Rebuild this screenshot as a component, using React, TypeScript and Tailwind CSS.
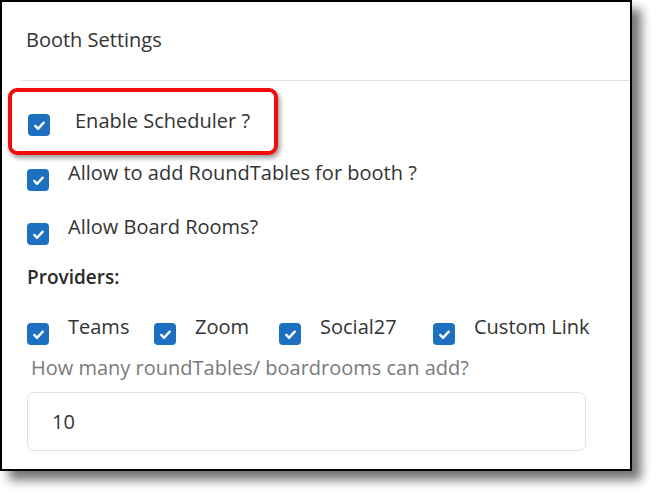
import React from "react";

function Check() {
  return (
    <span className="flex h-[22px] w-[22px] shrink-0 items-center justify-center rounded-[4px] bg-[#1d6fbf]">
      <svg width="15" height="15" viewBox="0 0 16 16" fill="none">
        <path d="M3.5 8.5l3 3 6-6.5" stroke="white" strokeWidth="2.6" strokeLinecap="round" strokeLinejoin="round" />
      </svg>
    </span>
  );
}

function Row({ label, gap, mt }: { label: string; gap: string; mt: string }) {
  return (
    <div className="flex items-start h-[28px]">
      <div className={mt}>
        <Check />
      </div>
      <span className={`${gap} leading-[28px]`}>{label}</span>
    </div>
  );
}

function Provider({ label, width }: { label: string; width: string }) {
  return (
    <div className={`flex items-start ${width}`}>
      <div className="mt-[10px]">
        <Check />
      </div>
      <span className="ml-[19px] leading-[28px]">{label}</span>
    </div>
  );
}

export default function App() {
  return (
    <div className="min-h-[496px] w-[657px] bg-white" style={{ fontFamily: '"Open Sans", "Noto Sans", sans-serif' }}>
      <div className="relative h-[471px] w-[632px] border-2 border-black bg-white text-[20px] text-[#333] shadow-[9px_9px_10px_rgba(0,0,0,0.55)]">
        <div className="pl-[24px] pt-[23px] h-[78px] text-[#333]">
          <span className="leading-[28px]">Booth Settings</span>
        </div>
        <div className="ml-[19px] border-t border-[#e3e3e3]" />
        <div className="flex flex-col pl-[25px] pt-[26px]">
          <div className="pl-[1px]">
            <Row label="Enable Scheduler ?" gap="ml-[25px]" mt="mt-[7px]" />
          </div>
          <div className="mt-[24px]">
            <Row label="Allow to add RoundTables for booth ?" gap="ml-[19px]" mt="mt-[10px]" />
          </div>
          <div className="mt-[26px]">
            <Row label="Allow Board Rooms?" gap="ml-[19px]" mt="mt-[10px]" />
          </div>
          <div className="mt-[22px] text-[19px] font-semibold leading-[28px] text-[#2a2a2a]">Providers:</div>
          <div className="mt-[22px] flex items-start h-[28px]">
            <Provider label="Teams" width="w-[127px]" />
            <Provider label="Zoom" width="w-[125px]" />
            <Provider label="Social27" width="w-[154px]" />
            <Provider label="Custom Link" width="w-[160px]" />
          </div>
          <div className="mt-[13px] pl-[4px] leading-[28px] text-[#7a7a7a]">How many roundTables/ boardrooms can add?</div>
          <div className="mt-[10px] flex h-[59px] w-[559px] items-center rounded-[7px] border border-[#e2e2e2] pl-[24px]">
            10
          </div>
        </div>
        <div className="pointer-events-none absolute left-[6px] top-[86px] h-[67px] w-[270px] rounded-[9px] border-[4px] border-[#f20c0c] shadow-[2px_3px_5px_rgba(0,0,0,0.4)]" />
      </div>
    </div>
  );
}
